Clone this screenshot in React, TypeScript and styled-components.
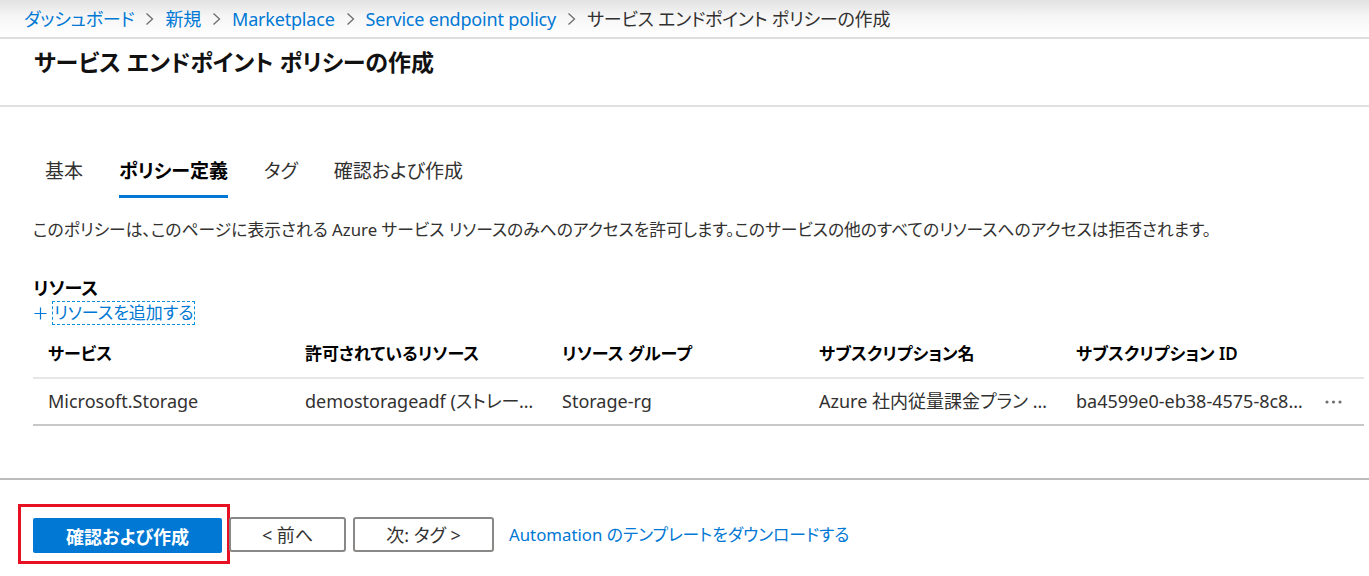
import React from "react";
import styled, { createGlobalStyle } from "styled-components";

const GlobalStyle = createGlobalStyle`
  html, body {
    margin: 0;
    padding: 0;
    background: #ffffff;
  }
  body {
    font-family: "Noto Sans", "Noto Sans CJK JP", sans-serif;
    font-feature-settings: "palt" 1;
    color: #323130;
    -webkit-font-smoothing: antialiased;
  }
  * { box-sizing: border-box; }
`;

const Page = styled.div`
  width: 1369px;
  min-height: 576px;
  display: flex;
  flex-direction: column;
`;

const Breadcrumb = styled.nav`
  height: 39px;
  display: flex;
  align-items: center;
  padding-left: 24px;
  background: linear-gradient(#e2e2e2 0%, #f6f6f6 45%, #ffffff 100%);
  border-bottom: 2px solid #dddddd;
  font-size: 18px;
`;

const Crumb = styled.a<{ $current?: boolean }>`
  color: ${(p) => (p.$current ? "#323130" : "#0078d4")};
  text-decoration: none;
  line-height: 24px;
  white-space: nowrap;
  letter-spacing: -0.2px;
`;

const Chevron = styled.svg`
  width: 9px;
  height: 14px;
  margin: 0 11px;
  flex: none;
`;

const Header = styled.header`
  height: 68px;
  padding: 7px 0 0 34px;
  border-bottom: 2px solid #e1e1e1;
`;

const Title = styled.h1`
  margin: 0;
  font-size: 23px;
  line-height: 32px;
  font-weight: 600;
  color: #111;
`;

const Main = styled.main`
  padding: 0 5px 0 33px;
`;

const TabList = styled.div`
  display: flex;
  gap: 36px;
  margin: 51px 0 0 12px;
`;

const Tab = styled.button<{ $active?: boolean }>`
  background: none;
  border: 0;
  padding: 0 0 10px;
  font: inherit;
  font-size: 19px;
  line-height: 27px;
  font-weight: ${(p) => (p.$active ? 700 : 400)};
  color: ${(p) => (p.$active ? "#000" : "#323130")};
  border-bottom: 3px solid ${(p) => (p.$active ? "#0078d4" : "transparent")};
  cursor: pointer;
`;

const Description = styled.p`
  margin: 20px 0 0;
  font-size: 16.8px;
  line-height: 24px;
  color: #323130;
`;

const SectionLabel = styled.div`
  margin-top: 34px;
  font-size: 18px;
  line-height: 25px;
  font-weight: 600;
  color: #000;
`;

const AddRow = styled.div`
  display: flex;
  align-items: center;
  height: 24px;
  color: #0078d4;
  font-size: 17px;
`;

const Plus = styled.svg`
  width: 13px;
  height: 13px;
  margin: 0 6px 0 1px;
  flex: none;
`;

const AddLink = styled.a`
  color: #0078d4;
  text-decoration: none;
  outline: 1px dashed #0a8fd8;
  line-height: 22px;
  padding: 0 1px;
`;

const Table = styled.div`
  display: grid;
  grid-template-columns: repeat(5, 257px) 1fr;
`;

const HeadCell = styled.div`
  height: 54px;
  display: flex;
  align-items: center;
  padding: 2px 15px 0;
  font-size: 17px;
  font-weight: 600;
  color: #000;
  border-bottom: 2px solid #e6e6e6;
  white-space: nowrap;
`;

const Cell = styled.div`
  height: 47px;
  line-height: 45px;
  padding: 0 5px 0 15px;
  font-size: 18px;
  color: #323130;
  border-bottom: 2px solid #c8c8c8;
  white-space: nowrap;
  overflow: hidden;
  text-overflow: ellipsis;
`;

const MoreCell = styled.div`
  height: 47px;
  display: flex;
  align-items: center;
  padding-left: 7px;
  border-bottom: 2px solid #c8c8c8;
`;

const Footer = styled.footer`
  margin-top: 52px;
  border-top: 2px solid #bcbcbc;
  padding: 24px 0 0 18px;
  display: flex;
  align-items: center;
`;

const Highlight = styled.div`
  border: 3px solid #e81123;
  padding: 11px 5px 8px 12px;
  display: flex;
`;

const PrimaryButton = styled.button`
  width: 189px;
  height: 35px;
  border: 0;
  border-radius: 2px;
  background: #0078d4;
  color: #fff;
  font: inherit;
  font-size: 18px;
  font-weight: 700;
  cursor: pointer;
`;

const SecondaryButton = styled.button<{ $w: number }>`
  width: ${(p) => p.$w}px;
  height: 35px;
  margin-left: 7px;
  border: 2px solid #8a8886;
  border-radius: 3px;
  background: #fff;
  color: #323130;
  font: inherit;
  font-size: 18px;
  cursor: pointer;
  &:first-of-type { margin-left: -1px; }
`;

const FooterLink = styled.a`
  margin-left: 15px;
  color: #0078d4;
  font-size: 16.8px;
  text-decoration: none;
`;

const ChevronIcon = () => (
  <Chevron viewBox="0 0 9 14">
    <polyline points="1.5,1.5 7.5,7 1.5,12.5" fill="none" stroke="#6e6e6e" strokeWidth="1.3" />
  </Chevron>
);

const PlusIcon = () => (
  <Plus viewBox="0 0 13 13">
    <path d="M6.5 0.5V12.5M0.5 6.5H12.5" stroke="#0078d4" strokeWidth="1.2" fill="none" />
  </Plus>
);

const MoreIcon = () => (
  <svg width="17" height="6" viewBox="0 0 17 6">
    <circle cx="2" cy="3" r="1.6" fill="#707070" />
    <circle cx="8.5" cy="3" r="1.6" fill="#707070" />
    <circle cx="15" cy="3" r="1.6" fill="#707070" />
  </svg>
);

const crumbs = ["ダッシュボード", "新規", "Marketplace", "Service endpoint policy"];
const tabs = ["基本", "ポリシー定義", "タグ", "確認および作成"];
const headers = ["サービス", "許可されているリソース", "リソース グループ", "サブスクリプション名", "サブスクリプション ID"];
const row = [
  "Microsoft.Storage",
  "demostorageadf (ストレージ アカウント)",
  "Storage-rg",
  "Azure 社内従量課金プラン マイクロソフト",
  "ba4599e0-eb38-4575-8c8d-4e1b2f6a9c30",
];

export default function App() {
  return (
    <Page>
      <GlobalStyle />
      <Breadcrumb>
        {crumbs.map((c) => (
          <React.Fragment key={c}>
            <Crumb href="#">{c}</Crumb>
            <ChevronIcon />
          </React.Fragment>
        ))}
        <Crumb $current>サービス エンドポイント ポリシーの作成</Crumb>
      </Breadcrumb>
      <Header>
        <Title>サービス エンドポイント ポリシーの作成</Title>
      </Header>
      <Main>
        <TabList>
          {tabs.map((t, i) => (
            <Tab key={t} $active={i === 1}>
              {t}
            </Tab>
          ))}
        </TabList>
        <Description>
          このポリシーは、このページに表示される Azure サービス リソースのみへのアクセスを許可します。このサービスの他のすべてのリソースへのアクセスは拒否されます。
        </Description>
        <SectionLabel>リソース</SectionLabel>
        <AddRow>
          <PlusIcon />
          <AddLink href="#">リソースを追加する</AddLink>
        </AddRow>
        <Table>
          {headers.map((h) => (
            <HeadCell key={h}>{h}</HeadCell>
          ))}
          <HeadCell />
          {row.map((c) => (
            <Cell key={c}>{c}</Cell>
          ))}
          <MoreCell>
            <MoreIcon />
          </MoreCell>
        </Table>
      </Main>
      <Footer>
        <Highlight>
          <PrimaryButton>確認および作成</PrimaryButton>
        </Highlight>
        <SecondaryButton $w={117}>&lt; 前へ</SecondaryButton>
        <SecondaryButton $w={141}>次: タグ &gt;</SecondaryButton>
        <FooterLink href="#">Automation のテンプレートをダウンロードする</FooterLink>
      </Footer>
    </Page>
  );
}
